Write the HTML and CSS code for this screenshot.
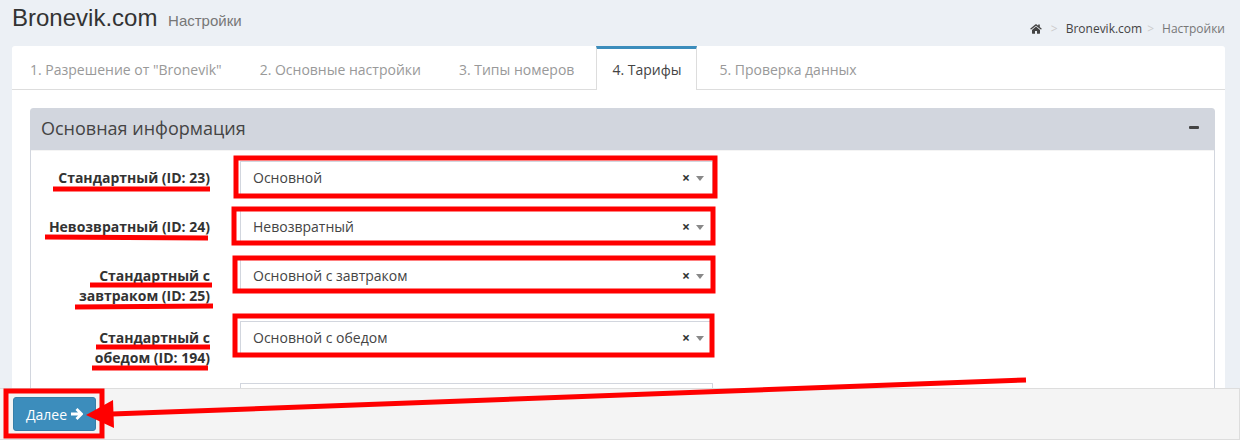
FILE: index.html
```html
<!DOCTYPE html>
<html lang="ru">
<head>
<meta charset="UTF-8">
<title>Bronevik.com - Настройки</title>
<meta name="viewport" content="width=device-width, initial-scale=1.0">
<link rel="stylesheet" href="styles.css">
</head>
<body>
  <header class="content-header">
    <h1>Bronevik.com <small>Настройки</small></h1>
    <nav class="breadcrumb">
      <a href="#" aria-label="Главная">
        <svg class="icon-home" viewBox="0 0 12 10" width="12" height="10"><path d="M6 2.6 10 6v3.3c0 .3-.2.5-.5.5H7V7H5v2.8H2.5c-.3 0-.5-.2-.5-.5V6z"/><path d="M6 .2c.3 0 .5.1.7.3L8.2 1.8V.6h1.6v2.5l1.8 1.5c.2.1.2.3 0 .4l-.4.5c-.1.1-.3.1-.4 0L6 1.7 1.2 5.5c-.1.1-.3.1-.4 0L.4 5c-.1-.1-.1-.3 0-.4L5.3.5C5.5.3 5.7.2 6 .2z"/></svg>
      </a>
      <a href="#">Bronevik.com</a>
      <span>Настройки</span>
    </nav>
  </header>

  <main class="tabs-custom">
    <nav class="nav-tabs">
      <a href="#">1. Разрешение от "Bronevik"</a>
      <a href="#">2. Основные настройки</a>
      <a href="#">3. Типы номеров</a>
      <a href="#" class="active">4. Тарифы</a>
      <a href="#">5. Проверка данных</a>
    </nav>

    <section class="box">
      <div class="box-header">
        <h2>Основная информация</h2>
        <button type="button" class="btn-collapse" aria-label="Свернуть"></button>
      </div>
      <form class="box-body" id="ratesForm">
        <div class="form-group">
          <label for="rate23">Стандартный (ID: 23)</label>
          <div class="select-wrap">
            <select id="rate23"><option>Основной</option></select>
            <button type="button" class="clear">×</button>
          </div>
        </div>
        <div class="form-group">
          <label for="rate24">Невозвратный (ID: 24)</label>
          <div class="select-wrap">
            <select id="rate24"><option>Невозвратный</option></select>
            <button type="button" class="clear">×</button>
          </div>
        </div>
        <div class="form-group">
          <label for="rate25">Стандартный с завтраком (ID: 25)</label>
          <div class="select-wrap">
            <select id="rate25"><option>Основной с завтраком</option></select>
            <button type="button" class="clear">×</button>
          </div>
        </div>
        <div class="form-group">
          <label for="rate194">Стандартный с обедом (ID: 194)</label>
          <div class="select-wrap">
            <select id="rate194"><option>Основной с обедом</option></select>
            <button type="button" class="clear">×</button>
          </div>
        </div>
        <div class="form-group">
          <span></span>
          <div class="select-wrap">
            <select aria-label="Тариф"><option></option></select>
          </div>
        </div>
      </form>
    </section>
  </main>

  <footer class="action-bar">
    <button type="submit" form="ratesForm" class="btn-next">Далее
      <svg viewBox="0 0 12 12" width="12" height="12"><path d="M5.5 1l5 5-5 5M0 6h10" fill="none" stroke="#fff" stroke-width="2.8"/></svg>
    </button>
  </footer>

  <!-- red marks over the form -->
  <svg class="marks" width="1240" height="440" aria-hidden="true">
    <rect x="236" y="158" width="479" height="38"/>
    <rect x="234" y="209" width="479" height="34"/>
    <rect x="235" y="258" width="478" height="33"/>
    <rect x="235" y="316" width="477" height="39"/>
    <rect x="6" y="391" width="96" height="45"/>
    <path d="M53 189H210M45 237L208 238M90 285H212M75 307L213 306M96 347H210M92 368H208"/>
    <path d="M1026 380L112 414"/>
    <path class="head" d="M86 415L113 400L114 428Z"/>
  </svg>
</body>
</html>
```

FILE: styles.css
```css
* {
  box-sizing: border-box;
}
body {
  font-family: "Open Sans", "Noto Sans", sans-serif;
  font-size: 14px;
  line-height: 20px;
  background: #ecf0f5;
  color: #333;
  margin: 0;
  height: 100vh;
  overflow: hidden;
}
a {
  color: #444;
  text-decoration: none;
}
button {
  font-family: inherit;
  cursor: pointer;
}
.content-header {
  display: flex;
  justify-content: space-between;
  align-items: flex-end;
  padding: 5px 15px 7px 12px;
}
.content-header h1 {
  font-family: "Liberation Sans", Arial, sans-serif;
  font-size: 24px;
  font-weight: 400;
  line-height: 26px;
  margin: 0 0 5px;
}
.content-header small {
  font-size: 15px;
  color: #777;
  padding-left: 4px;
}
.breadcrumb {
  display: flex;
  align-items: center;
  font-size: 12px;
}
.breadcrumb > * + *::before {
  content: ">";
  color: #ccc;
  padding: 0 8px 0 5px;
}
.breadcrumb > a:first-child {
  margin-right: 4px;
}
.breadcrumb span {
  color: #777;
}
.icon-home {
  display: block;
  fill: #444;
}
.tabs-custom {
  background: #fff;
  border-radius: 3px;
  margin: 0 15px 0 12px;
}
.nav-tabs {
  display: flex;
  gap: 6px;
  padding-left: 2px;
  border-bottom: 1px solid #ddd;
}
.nav-tabs a {
  color: #999;
  padding: 11px 15px 10px;
  border: 1px solid transparent;
  border-top: 3px solid transparent;
  border-bottom: 0;
  margin-bottom: -1px;
}
.nav-tabs .active {
  color: #444;
  background: #fff;
  border-color: #3c8dbc #ddd;
}
.box {
  border: 1px solid #d2d6de;
  border-radius: 3px;
  margin: 18px 10px 0 18px;
}
.box-header {
  display: flex;
  justify-content: space-between;
  align-items: center;
  background: #d2d6de;
  color: #444;
  padding: 9px 10px 12px;
  border-bottom: 1px solid #f4f4f4;
}
.box-header h2 {
  font-size: 18px;
  font-weight: 400;
  line-height: 20px;
  margin: 0;
}
.btn-collapse {
  width: 20px;
  height: 20px;
  padding: 0 5px 2px;
  border: 0;
  background: none;
}
.btn-collapse::before {
  content: "";
  display: block;
  height: 3px;
  border-radius: 1px;
  background: #444;
}
.box-body {
  padding: 10px;
}
.form-group {
  display: grid;
  grid-template-columns: 169px minmax(0, 473px);
  gap: 30px;
  align-items: start;
  margin-bottom: 15px;
}
.form-group label {
  font-weight: 700;
  text-align: right;
  padding-top: 7px;
}
.select-wrap {
  position: relative;
}
.select-wrap select {
  appearance: none;
  display: block;
  width: 100%;
  height: 34px;
  font: inherit;
  color: #444;
  background: #fff;
  border: 1px solid #d2d6de;
  border-radius: 0;
  padding: 0 40px 0 12px;
}
.select-wrap::after {
  content: "";
  position: absolute;
  right: 9px;
  top: 15px;
  border: 4px solid transparent;
  border-top: 5px solid #888;
  border-bottom: 0;
  pointer-events: none;
}
.select-wrap .clear {
  position: absolute;
  right: 23px;
  top: 7px;
  padding: 0;
  border: 0;
  background: none;
  color: #333;
  font-size: 14px;
  font-weight: 700;
  line-height: 20px;
}
.action-bar {
  position: fixed;
  left: 0;
  right: 0;
  bottom: 0;
  padding: 8px 13px;
  background: #f4f4f4;
  border: 1px solid #ddd;
  border-left: 0;
}
.btn-next {
  display: flex;
  align-items: center;
  gap: 4px;
  height: 34px;
  padding: 0 12px;
  font-size: 14px;
  color: #fff;
  background: #3c8dbc;
  border: 1px solid #367fa9;
  border-radius: 3px;
}
.marks {
  position: absolute;
  left: 0;
  top: 0;
  fill: none;
  stroke: #f00;
  stroke-width: 5;
  pointer-events: none;
}
.marks .head {
  fill: #f00;
  stroke: none;
}
```
